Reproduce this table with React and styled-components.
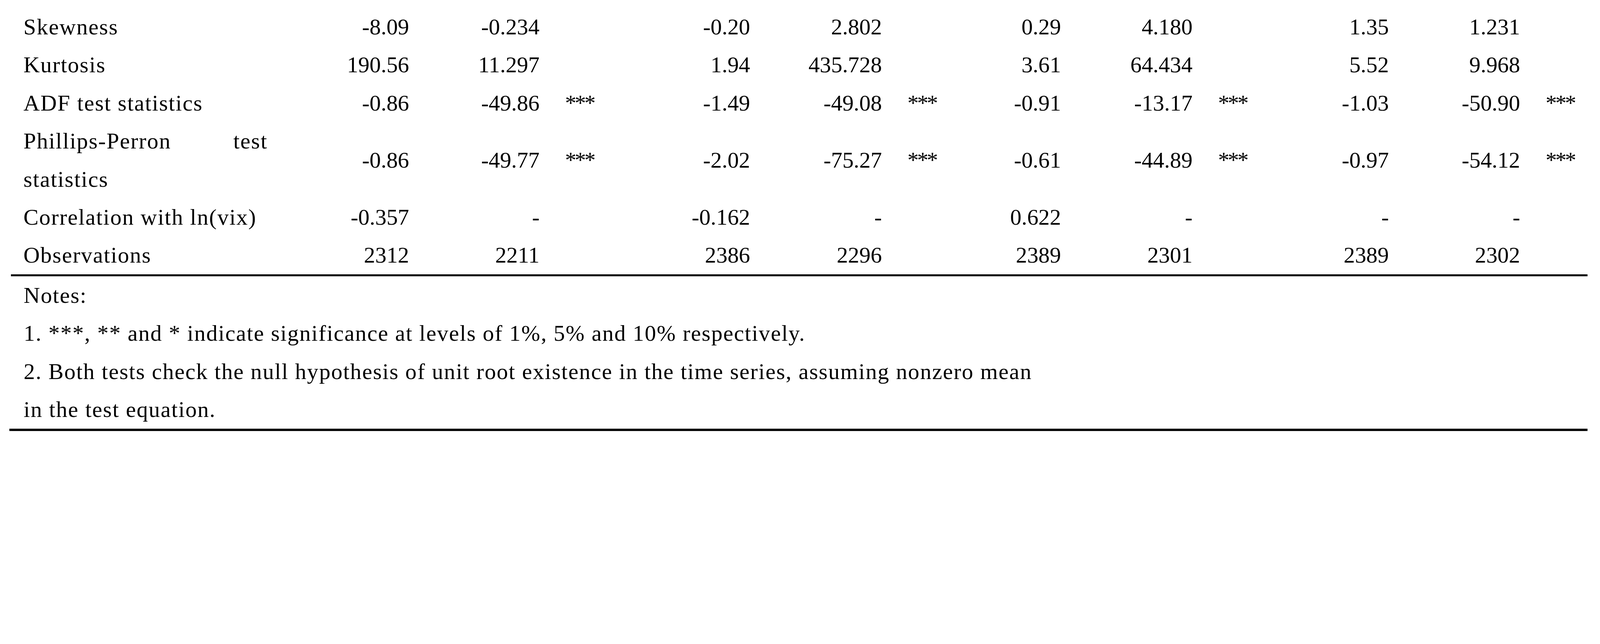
import React from 'react'
import styled, { createGlobalStyle } from 'styled-components'

// everything is measured in reference pixels and scaled to the window width
const W = 5949
const u = (n) => `${(n / W * 100).toFixed(4)}vw`

const GlobalStyle = createGlobalStyle`
  html, body {
    margin: 0;
    padding: 0;
    background: #ffffff;
    overflow: hidden;
  }
  body {
    font-family: "Palatino Linotype", "Book Antiqua", Palatino, "Liberation Serif", serif;
    color: #000000;
  }
`

const rows = [
    ['Skewness', '-8.09', '-0.234', '', '-0.20', '2.802', '', '0.29', '4.180', '', '1.35', '1.231', ''],
    ['Kurtosis', '190.56', '11.297', '', '1.94', '435.728', '', '3.61', '64.434', '', '5.52', '9.968', ''],
    ['ADF test statistics', '-0.86', '-49.86', '***', '-1.49', '-49.08', '***', '-0.91', '-13.17', '***', '-1.03', '-50.90', '***'],
    ['Phillips-Perron test statistics', '-0.86', '-49.77', '***', '-2.02', '-75.27', '***', '-0.61', '-44.89', '***', '-0.97', '-54.12', '***'],
    ['Correlation with ln(vix)', '-0.357', '-', '', '-0.162', '-', '', '0.622', '-', '', '-', '-', ''],
    ['Observations', '2312', '2211', '', '2386', '2296', '', '2389', '2301', '', '2389', '2302', ''],
]

// column widths per group: value, value, stars
const groups = [[526, 485, 294], [489, 490, 181], [485, 489, 246], [484, 488, 251]]

export default function App() {
    return (
        <>
            <GlobalStyle/>
            <Page>
                <Table>
                    {rows.map((row, r) => (
                        <React.Fragment key={r}>
                            <LabelCell>{row[0]}</LabelCell>
                            {row.slice(1).map((v, i) => (
                                (i % 3 === 2)
                                    ? <StarCell key={i}>{v}</StarCell>
                                    : <NumCell key={i}>{v}</NumCell>
                            ))}
                        </React.Fragment>
                    ))}
                </Table>
                <Notes>
                    <NoteLine>Notes:</NoteLine>
                    <NoteLine>1. ***, ** and * indicate significance at levels of 1%, 5% and 10% respectively.</NoteLine>
                    <NoteLine>2. Both tests check the null hypothesis of unit root existence in the time series, assuming nonzero mean</NoteLine>
                    <NoteLine>in the test equation.</NoteLine>
                </Notes>
            </Page>
        </>
    )
}

const Page = styled.div`
  width: 100vw;
  padding-top: ${u(29)};
  font-size: ${u(84)};
  line-height: ${u(141.5)};
`

const Table = styled.div`
  display: grid;
  grid-template-columns: ${u(954)} ${groups.map(g => g.map(u).join(' ')).join(' ')};
  align-items: center;
  margin-left: ${u(41)};
  width: ${u(5862)};
  border-bottom: ${u(8)} solid #000;
`

const LabelCell = styled.div`
  padding-left: ${u(46)};
  text-align: justify;
  letter-spacing: ${u(2.7)};
`

const NumCell = styled.div`
  text-align: right;
  white-space: nowrap;
`

const StarCell = styled.div`
  padding-left: ${u(95)};
  letter-spacing: ${u(-6)};
  white-space: nowrap;
`

const Notes = styled.div`
  margin-left: ${u(35)};
  width: ${u(5815)};
  padding-left: ${u(53)};
  border-bottom: ${u(9)} solid #000;
`

const NoteLine = styled.div`
  letter-spacing: ${u(2.7)};
  white-space: nowrap;
`
